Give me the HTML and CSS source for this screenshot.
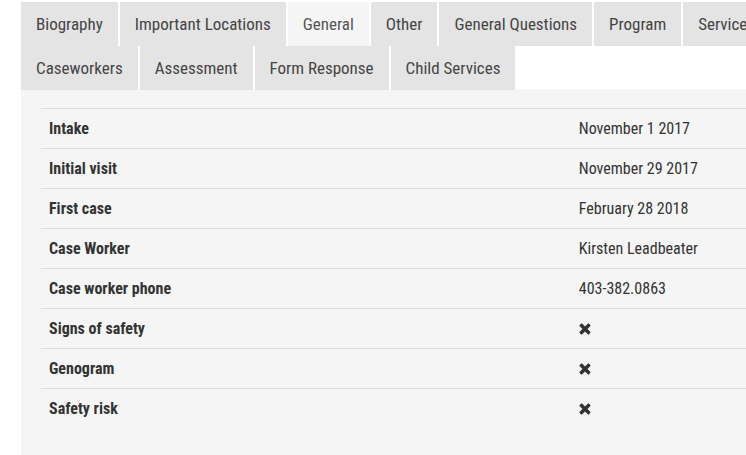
FILE: index.html
```html
<!DOCTYPE html>
<html lang="en">
<head>
<meta charset="utf-8">
<title>Case record</title>
<link rel="stylesheet" href="styles.css">
</head>
<body>
<svg class="symbols" aria-hidden="true">
  <symbol id="cross" viewBox="248 312 1296 1296"><path fill="currentColor" d="M1490 1322q0 40-28 68l-136 136q-28 28-68 28t-68-28l-294-294-294 294q-28 28-68 28t-68-28l-136-136q-28-28-28-68t28-68l294-294-294-294q-28-28-28-68t28-68l136-136q28-28 68-28t68 28l294 294 294-294q28-28 68-28t68 28l136 136q28 28 28 68t-28 68l-294 294 294 294q28 28 28 68z"/></symbol>
</svg>
<main class="record">
  <div class="tabs" role="tablist">
    <div class="tab-row" role="presentation">
      <button class="tab" role="tab">Biography</button>
      <button class="tab" role="tab">Important Locations</button>
      <button class="tab tab-active" role="tab" aria-selected="true">General</button>
      <button class="tab" role="tab">Other</button>
      <button class="tab" role="tab">General Questions</button>
      <button class="tab" role="tab">Program</button>
      <button class="tab" role="tab">Services</button>
    </div>
    <div class="tab-row" role="presentation">
      <button class="tab" role="tab">Caseworkers</button>
      <button class="tab" role="tab">Assessment</button>
      <button class="tab" role="tab">Form Response</button>
      <button class="tab" role="tab">Child Services</button>
    </div>
  </div>
  <section class="panel" role="tabpanel">
    <table class="details">
      <tbody>
        <tr><th scope="row">Intake</th><td>November 1 2017</td></tr>
        <tr><th scope="row">Initial visit</th><td>November 29 2017</td></tr>
        <tr><th scope="row">First case</th><td>February 28 2018</td></tr>
        <tr><th scope="row">Case Worker</th><td>Kirsten Leadbeater</td></tr>
        <tr><th scope="row">Case worker phone</th><td>403-382.0863</td></tr>
        <tr><th scope="row">Signs of safety</th><td><svg class="cross" role="img" aria-label="No"><use href="#cross"/></svg></td></tr>
        <tr><th scope="row">Genogram</th><td><svg class="cross" role="img" aria-label="No"><use href="#cross"/></svg></td></tr>
        <tr><th scope="row">Safety risk</th><td><svg class="cross" role="img" aria-label="No"><use href="#cross"/></svg></td></tr>
      </tbody>
    </table>
  </section>
</main>
</body>
</html>
```
FILE: styles.css
```css
* {
  box-sizing: border-box;
}

body {
  margin: 0;
  background: #fff;
  color: #333;
  font: 16px/24px "Roboto Condensed", "Liberation Sans Narrow", Roboto, sans-serif;
}

.symbols {
  display: none;
}

.record {
  display: flex;
  flex-direction: column;
  min-height: 100vh;
  padding: 2px 0 0 21px;
}

/* The tabs overlap the top edge of the panel. */
.tabs {
  position: relative;
  margin-bottom: -1px;
}

.tab-row {
  display: flex;
  gap: 2px;
  overflow: hidden;
}

.tab {
  flex: none;
  height: 44px;
  padding: 0 15px;
  border: 0;
  background: #e4e4e4;
  color: #444;
  font: inherit;
  font-size: 17px;
  white-space: nowrap;
  cursor: pointer;
}

.tab-active {
  background: #f5f5f5;
  color: #555;
}

.panel {
  flex: 1;
  padding: 19px 0 26px 20px;
  background: #f5f5f5;
}

.details {
  width: 100%;
  table-layout: fixed;
  border-collapse: separate;
  border-spacing: 0;
}

.details th,
.details td {
  height: 40px;
  padding: 0 8px;
  border-top: 1px solid #ddd;
  text-align: left;
  white-space: nowrap;
}

.details th {
  width: 75%;
  font-weight: 700;
}

.details td {
  padding: 0 9px;
}

.cross {
  display: block;
  width: 12px;
  height: 12px;
}
```
